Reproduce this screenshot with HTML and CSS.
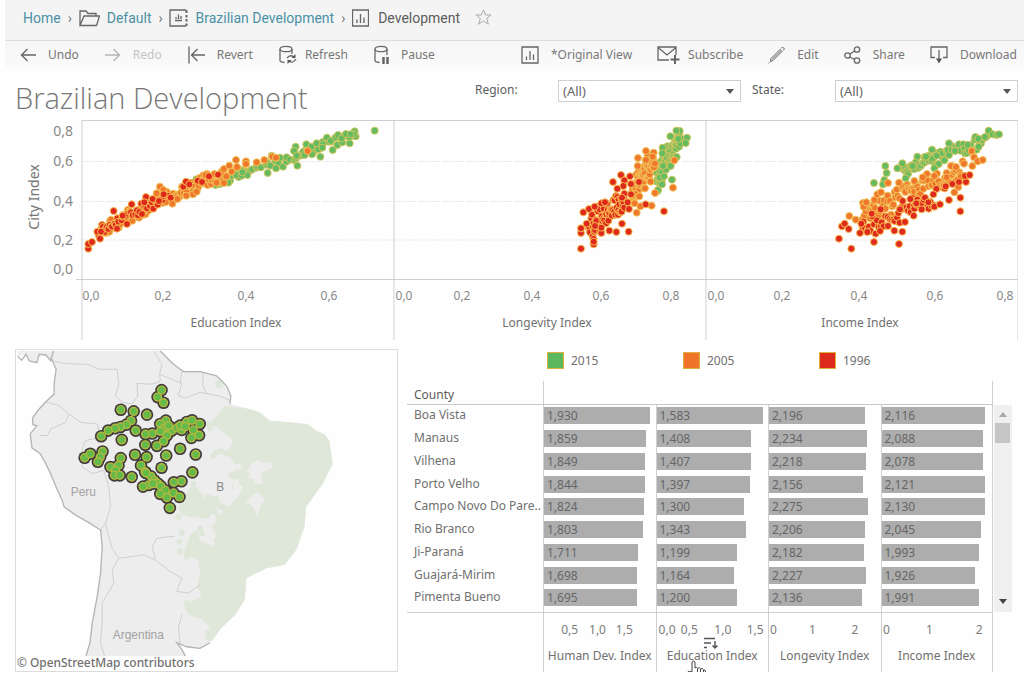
FILE: index.html
```html
<!DOCTYPE html>
<html lang="en">
<head>
<meta charset="utf-8">
<title>Brazilian Development</title>
<link rel="stylesheet" href="styles.css">
</head>
<body>
<header class="top">
  <nav class="crumbs" aria-label="Breadcrumb">
    <a href="#">Home</a><span class="sep">›</span>
    <svg class="icon" width="21" height="18" viewBox="0 0 21 18"><path d="M1 16.500V2h6l2 2.500h8V7M1 16.500L5 7h15.500l-3 9.500z"/></svg>
    <a href="#">Default</a><span class="sep">›</span>
    <svg class="icon" width="19" height="18" viewBox="0 0 19 18"><path d="M17 1H1v16h16M6 11.500h7M7 10V8M9.500 10V5.500M12 10V7"/><path stroke-width="2" d="M17.500 1v3M17.500 6v2.500M17.500 10v2.500M17.500 14.500v2.500"/></svg>
    <a href="#">Brazilian Development</a><span class="sep">›</span>
    <svg class="icon" width="17" height="18" viewBox="0 0 17 18"><path d="M.5 1h16v16H.5zM5 14v-3.500M8.500 14V5M12 14V8.500"/></svg>
    <span class="here">Development</span>
    <button class="star" aria-label="Favorite"><svg class="icon pale" width="17" height="17" viewBox="0 0 17 17"><path d="M8.500 1l2.200 5h5.300l-4.300 3.500 1.600 5.700-4.800-3.300-4.800 3.300 1.600-5.700L1 6h5.300z"/></svg></button>
  </nav>
  <div class="toolbar">
    <div class="tools">
      <button><svg class="icon" width="16" height="16" viewBox="0 0 16 16"><path d="M16 8H1.500M7.500 2L1.500 8l6 6"/></svg>Undo</button>
      <button class="off"><svg class="icon" width="16" height="16" viewBox="0 0 16 16"><path d="M0 8h14.500M8.500 2l6 6-6 6"/></svg>Redo</button>
      <button><svg class="icon" width="17" height="18" viewBox="0 0 17 18"><path d="M1 .5v17M17 9H3.500M9.500 3l-6 6 6 6"/></svg>Revert</button>
      <button class="near"><svg class="icon" width="18" height="20" viewBox="0 0 18 20"><ellipse cx="7" cy="4" rx="6" ry="2.700"/><path d="M1 4v11.500q0 1.500 4.500 2M13 4v5M8 13q3-4 7-1M17 14q-3 5-7 2"/><path class="solid" d="M16.500 9v4h-4zM8.500 19v-4h4z"/></svg>Refresh</button>
      <button><svg class="icon" width="15" height="20" viewBox="0 0 15 20"><ellipse cx="7" cy="4" rx="6" ry="2.700"/><path d="M1 4v11.500q0 1.500 4.500 2M13 4v6"/><path stroke-width="2.500" d="M9.500 12v7M13.500 12v7"/></svg>Pause</button>
    </div>
    <div class="tools right">
      <button><svg class="icon" width="18" height="18" viewBox="0 0 18 18"><path d="M1 1h16v16H1zM5.500 14v-3.500M9 14V5M12.500 14V8.500"/></svg>*Original View</button>
      <button class="near"><svg class="icon" width="23" height="18" viewBox="0 0 23 18"><path d="M12 14H1V1h18v8M1 1.500L10 9l9-7.500"/><path stroke-width="2" d="M18 9v9M13.500 13.500h9"/></svg>Subscribe</button>
      <button><svg class="icon" width="17" height="18" viewBox="0 0 17 18"><path stroke-width="1" d="M3 12.500L12 3.500l2 2-9 9-2.500 1zM13 2.500l1.500-1.500 2 2L15 4.500M.5 17l1-.5M4 13.500l9-9"/></svg>Edit</button>
      <button><svg class="icon" width="17" height="18" viewBox="0 0 17 18"><circle cx="3.500" cy="9.500" r="2.700"/><circle cx="13" cy="3.500" r="2.700"/><circle cx="13" cy="14.500" r="2.700"/><path d="M6 8l4.500-3M6 11l4.500 2.500"/></svg>Share</button>
      <button><svg class="icon" width="18" height="18" viewBox="0 0 18 18"><path d="M5 11.500H1V1h16v10.500h-4M9 4v9"/><path class="solid" d="M6 12.500h6L9 17.500z"/></svg>Download</button>
    </div>
  </div>
</header>

<main class="board">
  <div class="heading">
    <h1>Brazilian Development</h1>
    <div class="filters">
      <label for="region">Region:</label>
      <span class="pick"><select id="region"><option>(All)</option></select><svg class="caret" width="8" height="5" viewBox="0 0 8 5"><path d="M0 0h8L4 5z"/></svg></span>
      <label for="state">State:</label>
      <span class="pick"><select id="state"><option>(All)</option></select><svg class="caret" width="8" height="5" viewBox="0 0 8 5"><path d="M0 0h8L4 5z"/></svg></span>
    </div>
  </div>

  <svg class="scatter" viewBox="15 120 1003 220" role="img" aria-label="City index by education, longevity and income">
    <path class="guide" d="M82 161.500H1018M82 201.500H1018M82 240H1018"/>
    <path class="frame" d="M82 120.500H1018M76 279.500H1018M82 120V340M394 120V340M706 120V340M1018 120V340"/>
    <g class="ylab"><text x="73" y="136">0,8</text><text x="73" y="166">0,6</text><text x="73" y="206">0,4</text><text x="73" y="245">0,2</text><text x="73" y="274">0,0</text></g>
    <text class="ytitle" transform="translate(39 197) rotate(-90)">City Index</text>
    <g class="tick">
      <text x="91" y="300">0,0</text><text x="163" y="300">0,2</text><text x="246" y="300">0,4</text><text x="329" y="300">0,6</text>
      <text x="404" y="300">0,0</text><text x="462" y="300">0,2</text><text x="532" y="300">0,4</text><text x="601" y="300">0,6</text><text x="671" y="300">0,8</text>
      <text x="716" y="300">0,0</text><text x="782" y="300">0,2</text><text x="859" y="300">0,4</text><text x="935" y="300">0,6</text><text x="1005" y="300">0,8</text>
    </g>
    <g class="axis"><text x="236" y="327">Education Index</text><text x="547" y="327">Longevity Index</text><text x="860" y="327">Income Index</text></g>
    <g id="education" transform="translate(0 115) scale(.33333)"></g>
    <g id="longevity" transform="translate(390 115) scale(.33333)"></g>
    <g id="income" transform="translate(700 115) scale(.33333)"></g>
  </svg>

  <div class="lower">
    <svg class="map" viewBox="15 349 383 323" role="img" aria-label="Map of counties">
      <g transform="translate(0 340) scale(.33333)">
        <path class="land" d="M158 30L150 48 166 85 160 128 160 160 135 183 112 208 95 232 96 252 108 255 88 280 93 322 118 340 135 370 150 402 168 445 185 482 190 500 225 525 262 546 300 570 305 620 300 700 290 770 275 850 268 910 256 950 556 950 545 930 530 910 560 922 600 927 630 910 660 870 700 830 735 780 740 715 800 685 855 675 890 630 915 560 920 500 970 430 1000 370 990 300 950 270 870 245 810 240 750 205 690 190 693 165 680 135 650 105 600 92 550 92 520 70 480 30z"/>
        <path class="land" d="M50 30H158L150 60 135 42 115 40 108 65 85 60 72 42 50 46z"/>
        <g id="woods">
          <path class="green" d="M672 195L652 225 630 250 655 262 670 275 700 300 690 325 660 340 690 350 710 380 690 410 730 440 715 470 685 500 660 485 655 465 615 475 590 440 572 440 550 475 538 515 560 530 625 535 655 490 670 515 635 560 650 585 640 620 600 600 590 570 570 585 560 615 550 640 595 660 600 700 592 740 605 770 550 797 565 825 605 840 630 860 615 900 635 905 665 865 705 828 735 780 740 715 800 685 855 675 890 630 915 560 920 500 970 430 1000 370 990 300 975 280 950 270 925 250 870 245 810 240 780 215 750 205 710 200z"/>
          <circle class="green" cx="658" cy="130" r="12"/>
        </g>
        <path class="hole" d="M752 372l20-12 18 6 24-2 4 18-18 10-12 4-4 14 6 14-10 8-16-4-8-16-10 2 4-16-12-6 10-8zM765 460l12-4 10 12 8 16-10 6-6 22-10 20-4-24-12-14-16-8 12-10zM700 430l6-16 12 5-6 30-10-2zM700 375l16-6 12 8-8 12-18-2z"/>
        <path class="border" d="M158 60L195 68 260 70 295 85 350 85 355 130 345 165 365 185 395 190M460 30L485 70 478 100 480 122 455 130 410 128 412 165 395 190M478 100L545 128 535 165 555 172 600 155 655 165 690 178M610 95L608 130 620 160M545 92L540 128M135 183L175 195 205 220 195 245 150 265 140 285 118 285M205 220L240 245 290 250M290 250L300 290 255 300 245 325 245 380 275 400 310 390 325 440 330 500 315 550 300 570M315 550L325 590 335 625 355 655 335 690 340 730 305 790 305 850 300 910 312 950M355 655L430 645 465 660 510 695 545 715 530 755 565 760 600 735M465 655L455 620 470 595 525 588M545 825L535 865 540 912"/>
        <path class="coast" d="M50 46L62 58 75 40 85 60 108 65 115 40 135 42 150 60 158 30M150 48L166 85 160 128 160 160 135 183 112 208 95 232 96 252 108 255 88 280 93 322 118 340 135 370 150 402 168 445 185 482 190 500 225 525 262 546 300 570 305 620 300 700 290 770 275 850 268 910 256 950M556 950L545 930 530 910 560 922 600 927 630 910M480 30L520 70 550 92 600 92 650 105 680 135 693 165 690 190"/>
        <text class="place" x="210" y="467">Peru</text><text class="place" x="337" y="900">Argentina</text><text class="mark" x="649" y="453">B</text>
        <g id="halo"></g><g id="pins"></g>
      </g>
      <path class="strip" d="M16 657H397V671H16z"/>
      <text class="credit" x="16" y="668">© OpenStreetMap contributors</text>
    </svg>

    <section class="side">
      <ul class="legend"><li class="y15">2015</li><li class="y05">2005</li><li class="y96">1996</li></ul>
      <div class="data">
        <table>
          <colgroup><col class="c-name"><col><col><col><col></colgroup>
          <thead><tr><th scope="col">County</th><th></th><th></th><th></th><th></th></tr></thead>
          <tbody id="rows"></tbody>
          <tfoot><tr>
            <td></td>
            <td><svg class="scale"><text x="23%" y="17">0,5</text><text x="48%" y="17">1,0</text><text x="72%" y="17">1,5</text></svg><span>Human Dev. Index</span></td>
            <td class="hovered"><svg class="scale"><text x="9%" y="17">0,0</text><text x="29%" y="17">0,5</text><text x="59%" y="17">1,0</text><text x="88%" y="17">1,5</text></svg><span>Education Index</span>
              <svg class="sort" width="14" height="13" viewBox="0 0 14 13"><path d="M0 1.500h11M0 6h7M0 10.500h3M11 4v7M8.500 8.500L11 11l2.500-2.500"/></svg>
              <svg class="hand" width="20" height="20" viewBox="0 0 20 20"><path d="M5 12V3q0-2 1.500-2T8 3v5q1.500-1.500 2.700.3 1.800-1.200 2.800.5 1.800-1 3 1 2-.3 2 2.200v4l-1.500 4H7L1 13q-.5-2 1.500-1.700zM10.500 8.500V12M13.500 9v3M16.500 10v2.500M10 15v2M13 15v2"/></svg></td>
            <td><svg class="scale"><text x="4%" y="17">0</text><text x="39%" y="17">1</text><text x="77%" y="17">2</text></svg><span>Longevity Index</span></td>
            <td><svg class="scale"><text x="4%" y="17">0</text><text x="43%" y="17">1</text><text x="88%" y="17">2</text></svg><span>Income Index</span></td>
          </tr></tfoot>
        </table>
        <div class="scroll">
          <button aria-label="Scroll up"><svg width="8" height="5" viewBox="0 0 8 5"><path fill="#aaa" d="M4 0l4 5H0z"/></svg></button>
          <div class="thumb"></div>
          <button class="down" aria-label="Scroll down"><svg width="8" height="5" viewBox="0 0 8 5"><path fill="#444" d="M0 0h8L4 5z"/></svg></button>
        </div>
      </div>
    </section>
  </div>
</main>
<script src="app.js"></script>
</body>
</html>
```
FILE: styles.css
```css
* { box-sizing: border-box; }
body { margin: 0; background: #fefefe; color: #707070; font: 12px/16px "Noto Sans", "Open Sans", sans-serif; }
button { border: 0; padding: 0; background: none; color: inherit; font: inherit; cursor: pointer; }
.top { margin-left: 5px; }
.crumbs { display: flex; align-items: center; height: 40px; padding: 0 18px 5px; gap: 7px; background: #f4f4f4; font: 14px/18px Roboto, "Liberation Sans", sans-serif; }
.crumbs a { color: #4b91a5; text-decoration: none; }
.sep { color: #777; width: 4px; }
.here { color: #5c5c5c; margin-left: 2px; }
.star { display: flex; margin-left: 8px; }
.icon { flex: none; fill: none; stroke: #666; stroke-width: 1.3; }
.icon .solid { fill: #555; stroke: none; }
.pale { stroke: #aaa; stroke-width: 1; }
.toolbar { display: flex; justify-content: space-between; align-items: center; height: 31px; padding: 0 7px 2px 15px; border-top: 1px solid #dedede; background: linear-gradient(#f6f6f6, #fafafa 85%, #fefefe); color: #777; }
.tools { display: flex; gap: 26px; }
.right { gap: 25px; }
.tools button { display: flex; align-items: center; gap: 12px; height: 24px; white-space: nowrap; }
.tools .near { gap: 8px; }
.tools .off { color: #c4c4c4; }
.off .icon { stroke: #b5b5b5; }

.board { padding: 0 6px 0 15px; }
.heading { display: flex; justify-content: space-between; height: 49px; }
h1 { margin: 7px 0 0; color: #777; font: 300 29px/40px "Open Sans", "Noto Sans", sans-serif; white-space: nowrap; }
.filters { display: grid; grid-template-columns: 72px 183px 72px 183px; column-gap: 11px; padding-top: 9px; align-items: start; color: #5c5c5c; }
.filters label { line-height: 20px; }
.pick { position: relative; }
.pick select { width: 100%; height: 22px; padding: 0 4px; border: 1px solid #ccd2d4; border-radius: 0; background: #fff; color: #666; font: 13px/18px "Noto Sans", sans-serif; appearance: none; }
.caret { position: absolute; right: 7px; top: 9px; fill: #555; pointer-events: none; }

.scatter { display: block; width: 100%; height: auto; }
.guide { stroke: #ededed; stroke-dasharray: 10 2; }
.frame { fill: none; stroke: #cfcfd3; }
.ylab text { text-anchor: end; font-size: 14px; fill: #888; }
.ytitle { text-anchor: middle; font-size: 14px; fill: #777; }
.tick text, .axis text { text-anchor: middle; fill: #888; }
.axis text { fill: #707070; }
.dot { stroke-width: 3; }
.g { fill: #65bb5f; stroke: #d0c45c; }
.o { fill: #f0782c; stroke: #f0c458; }
.r { fill: #de2a1c; stroke: #f6bc50; }

.lower { display: grid; grid-template-columns: 383fr 611fr; column-gap: 9px; margin-top: 9px; align-items: start; }
.map { display: block; width: 100%; height: auto; border: 1px solid #dcdcdc; }
.land, .hole { fill: #ededed; }
.green { fill: #dfe7d9; }
.border { fill: none; stroke: #cfcfcf; stroke-width: 3; }
.coast { fill: none; stroke: #b4b4b4; stroke-width: 4; }
.place { font: 36px "Liberation Sans", sans-serif; fill: #a2a2a2; }
.mark { font: 36px "Liberation Sans", sans-serif; fill: #888; }
.strip { fill: #fefefe; }
.credit { font-size: 12px; font-weight: 500; fill: #707070; }
#halo circle { fill: #3d3d3d; }
#pins circle { fill: #62bb48; stroke: #b8b840; stroke-width: 4; }

.legend { display: flex; height: 32px; margin: 0; padding: 0 0 0 140px; list-style: none; }
.legend li { display: flex; gap: 7px; align-items: center; width: 136px; height: 23px; }
.legend li::before { content: ""; width: 15px; height: 15px; border: 1px solid #e0b040; }
.y15::before { background: #5cb85f; }
.y05::before { background: #f0752b; }
.y96::before { background: #dc2a1c; }
.data { display: grid; grid-template-columns: 1fr 18px; column-gap: 1px; padding-right: 6px; }
table { width: 100%; table-layout: fixed; border-spacing: 0; }
.c-name { width: 136px; }
th, td { padding: 0; font-weight: 400; text-align: left; }
thead th { height: 24px; border-bottom: 1px solid #c8c8c8; color: #5c5c5c; padding-top: 4px; }
th:first-child, td:first-child { padding-left: 7px; white-space: nowrap; }
thead th:nth-child(2), td + td { border-left: 1px solid #cfcfcf; }
th:last-child, td:last-child { border-right: 1px solid #cfcfcf; }
tbody tr { height: 23px; }
tbody tr:nth-child(4n) { height: 22px; }
tbody tr:last-child { height: 25px; }
tbody td { vertical-align: top; line-height: 20px; }
.bar { height: 17px; margin-top: 2px; padding-left: 3px; background: #adadad; color: #666; line-height: 17px; }
tfoot td { position: relative; height: 60px; border-top: 1px solid #cfcfcf; vertical-align: top; text-align: center; }
tfoot span { display: block; margin-top: 3px; white-space: nowrap; }
.scale { display: block; width: 100%; height: 32px; padding-top: 4px; overflow: visible; }
.scale text { text-anchor: middle; fill: #7c7c7c; }
.sort { position: absolute; left: 47px; top: 24px; fill: none; stroke: #555; stroke-width: 1.500; }
.hand { position: absolute; left: 30px; top: 47px; fill: #fff; stroke: #444; }
.scroll { display: flex; flex-direction: column; margin: 24px 0 60px; background: #f0f0f0; }
.scroll button { display: flex; height: 18px; align-items: center; justify-content: center; }
.scroll .down { margin-top: auto; height: 22px; }
.thumb { width: 15px; height: 20px; margin-left: 1px; background: #c6c6c6; }
```
FILE: app.js
```js
const NS = "http://www.w3.org/2000/svg";

function dots(id, text, r, cls) {
  const host = document.getElementById(id);
  text.trim().split(/\s+/).forEach(pair => {
    const [x, y] = pair.split(",");
    const c = document.createElementNS(NS, "circle");
    c.setAttribute("cx", x);
    c.setAttribute("cy", y);
    c.setAttribute("r", r);
    if (cls) c.setAttribute("class", cls);
    host.append(c);
  });
}

// Spread n points round a line through the given knots.
let seed = 7;
const rnd = () => (seed = (seed * 16807) % 2147483647) / 2147483647;
function band(knots, n, spread) {
  const out = [];
  for (let i = 0; i < n; i++) {
    const t = (i + rnd()) / n * (knots.length - 1);
    const k = Math.min(Math.floor(t), knots.length - 2), f = t - k;
    const [a, b] = [knots[k], knots[k + 1]];
    const dy = (rnd() + rnd() - 1) * spread;
    out.push(Math.round(a[0] + (b[0] - a[0]) * f) + "," + Math.round(a[1] + (b[1] - a[1]) * f + dy));
  }
  return out.join(" ");
}

dots("education", band([[580,200],[680,190],[760,158],[880,135],[930,100],[1065,55]], 60, 18), 10.5, "dot g");
dots("education", "589,193 620,208 647,210 685,203 708,180 725,182 742,180 727,172 803,174 828,160 815,122 840,128 892,152 887,95 882,108 890,122 919,88 935,95 936,118 961,125 950,85 968,88 967,98 998,105 981,68 992,78 1014,60 1025,70 1038,57 1049,85 1067,64 1062,57 1052,58 1124,47", 10.5, "dot g");
dots("education", band([[300,350],[340,330],[400,297],[450,275],[500,250],[560,225],[620,195],[680,180]], 95, 22), 10.5, "dot o");
dots("education", "480,215 490,225 470,235 517,266 532,252 559,242 579,238 590,230 617,180 650,203 672,204 665,170 672,162 688,152 695,170 711,156 708,135 738,139 738,147 770,142 793,135 817,125 828,128 923,108", 10.5, "dot o");
dots("education", band([[295,350],[340,330],[400,295],[450,270],[510,240]], 45, 20), 10.5, "dot r");
dots("education", "265,401 265,387 276,381 300,371 292,350 303,350 341,288 395,268 438,246 433,262 458,252 477,258 491,238 512,248 550,215 558,200 568,208 593,197 606,201 627,184 654,179 381,327 351,341 368,302", 10.5, "dot r");

dots("longevity", band([[800,200],[815,160],[835,125],[855,95],[872,80]], 75, 42), 10.5, "dot g");
dots("longevity", "859,47 841,64 891,68 887,84 865,72 818,98 817,115 842,153 819,153 846,194 816,208 809,188 822,184", 10.5, "dot g");
dots("longevity", band([[725,240],[745,215],[758,185],[775,160],[792,145]], 70, 50), 10.5, "dot o");
dots("longevity", "768,108 744,129 788,125 768,135 743,153 853,136 849,218 795,234 785,272 751,274 740,293 734,265 782,200 765,220 795,146", 10.5, "dot o");
dots("longevity", band([[595,328],[620,315],[650,300],[680,275],[705,250]], 62, 50), 10.5, "dot r");
dots("longevity", "573,401 611,388 611,372 611,380 573,354 573,340 590,326 580,292 597,282 614,275 634,265 645,262 669,201 693,180 720,184 703,196 682,221 700,213 723,207 747,201 767,268 822,289 716,350 679,351 658,347 634,338 615,333 696,326 723,238 696,248 717,282 713,262", 10.5, "dot r");

dots("income", band([[605,175],[640,155],[690,135],[740,115],[800,92],[860,66]], 60, 30), 10.5, "dot g");
dots("income", "522,204 556,153 560,174 553,195 549,208 592,160 607,145 617,190 652,125 678,125 696,104 747,85 710,122 733,136 765,108 803,90 836,95 835,71 855,66 866,47 878,58 890,60 897,58 716,147 703,160 638,153", 10.5, "dot g");
dots("income", band([[485,305],[540,280],[600,245],[660,210],[730,195],[790,160]], 80, 42), 10.5, "dot o");
dots("income", "448,303 467,314 491,275 499,262 523,255 532,238 543,232 564,204 597,203 643,198 668,187 703,183 753,153 768,156 792,146 815,108 822,127 833,139 848,135 817,153 740,174 740,187 775,216 763,232", 10.5, "dot o");
dots("income", band([[485,332],[530,330],[580,310],[620,285],[660,265],[710,250]], 48, 34), 10.5, "dot r");
dots("income", "417,371 454,401 522,381 597,387 426,334 434,326 446,342 480,354 502,351 607,350 583,347 540,348 515,296 542,283 600,283 608,258 631,252 649,265 665,283 685,262 700,238 703,275 720,268 747,255 781,248 781,289 734,220 737,214 757,207 777,201 798,201 795,183 809,180 641,302 484,326", 10.5, "dot r");

dots("woods", "645,245 630,262 622,250 650,335 665,332 640,345 695,405 712,398 705,440 660,500 645,515 655,530 600,480 585,455 575,470 545,500 535,530 545,578 538,605 540,635 600,565 605,580 585,600 560,650 650,600 560,790 575,805 625,880 625,470 580,430 740,430", 9, "green");

const pins = "484,148 472,169 490,186 361,207 400,212 440,222 392,240 378,252 360,259 344,263 323,270 302,287 406,270 364,298 436,281 456,279 435,313 470,316 497,240 480,250 488,265 515,270 500,285 490,302 530,262 545,268 540,255 560,244 555,258 576,239 599,250 580,268 597,284 574,292 540,325 587,342 498,345 484,382 577,396 404,343 439,350 252,352 269,340 306,333 299,350 292,364 361,353 354,375 330,380 345,390 342,405 358,405 394,410 422,375 434,394 452,408 462,420 475,432 470,428 445,434 428,439 482,438 495,450 480,461 500,472 520,458 538,470 521,426 544,423 509,503 480,272 505,255 437,398 458,430";
dots("halo", pins, 19);
dots("pins", pins, 12);

const places = [
  ["Boa Vista", 1930, 1583, 2196, 2116],
  ["Manaus", 1859, 1408, 2234, 2088],
  ["Vilhena", 1849, 1407, 2218, 2078],
  ["Porto Velho", 1844, 1397, 2156, 2121],
  ["Campo Novo Do Pare..", 1824, 1300, 2275, 2130],
  ["Rio Branco", 1803, 1343, 2206, 2045],
  ["Ji-Paraná", 1711, 1199, 2182, 1993],
  ["Guajará-Mirim", 1698, 1164, 2227, 1926],
  ["Pimenta Bueno", 1695, 1200, 2136, 1991]
];
const full = [2035, 1665, 2550, 2265];
document.getElementById("rows").innerHTML = places.map(([name, ...vals]) =>
  "<tr><td>" + name + "</td>" + vals.map((v, i) =>
    `<td><div class="bar" style="width:${(v / full[i] * 100).toFixed(1)}%">${String(v).replace(/^(\d)/, "$1,")}</div></td>`
  ).join("") + "</tr>").join("");
```
